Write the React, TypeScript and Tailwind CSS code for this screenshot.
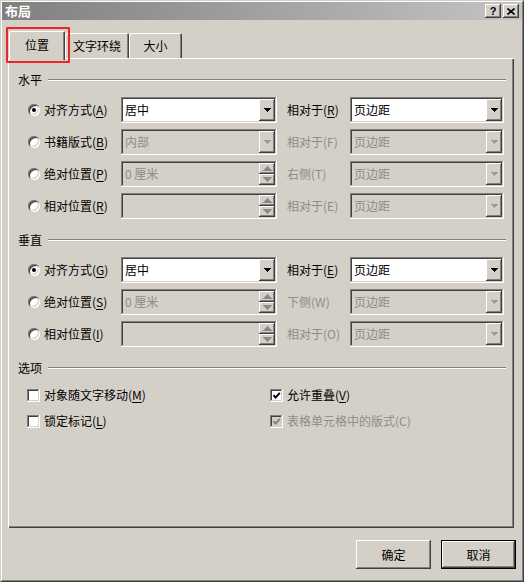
import React from 'react';

const raised =
  'shadow-[inset_-1px_-1px_0_#404040,inset_1px_1px_0_#fff,inset_-2px_-2px_0_#808080,inset_2px_2px_0_#d4d0c8]';
const sunken =
  'shadow-[inset_-1px_-1px_0_#fff,inset_1px_1px_0_#808080,inset_-2px_-2px_0_#d4d0c8,inset_2px_2px_0_#404040]';

function Down({ c }: { c: string }) {
  return (
    <svg width="7" height="4" viewBox="0 0 7 4" shapeRendering="crispEdges">
      <path d="M0 0h7v1h-1v1h-1v1h-1v1h-1v-1h-1v-1h-1v-1h-1z" fill={c} />
    </svg>
  );
}

function Tri({ up, c }: { up?: boolean; c: string }) {
  return (
    <svg width="9" height="5" viewBox="0 0 9 5" className={up ? 'rotate-180' : ''} shapeRendering="crispEdges">
      <path d="M0 0h9v1h-1v1h-1v1h-1v1h-1v1h-1v-1h-1v-1h-1v-1h-1v-1h-1z" fill={c} />
    </svg>
  );
}

function Key({ k, off }: { k: string; off?: boolean }) {
  return <>({off ? k : <u className="underline-offset-2">{k}</u>})</>;
}

function Combo({ value, off, spin, w }: { value: string; off?: boolean; spin?: boolean; w: string }) {
  return (
    <div className={`h-[26px] flex items-stretch p-[2px] ${w} ${off ? 'bg-[#d4d0c8]' : 'bg-white'} ${sunken}`}>
      <span className={`flex-1 flex items-center pl-[2px] text-[12px] leading-[16px] ${off ? 'text-[#8c8c8c]' : 'text-black'}`}>
        {value}
      </span>
      {spin ? (
        <div className="w-[16px] flex flex-col">
          <div className={`flex-1 flex items-center justify-center bg-[#d4d0c8] ${raised}`}>
            <Tri up c="#8a8a8a" />
          </div>
          <div className={`flex-1 flex items-center justify-center bg-[#d4d0c8] ${raised}`}>
            <Tri c="#8a8a8a" />
          </div>
        </div>
      ) : (
        <div className={`w-[16px] flex items-center justify-center bg-[#d4d0c8] ${raised}`}>
          <Down c={off ? '#9a9a9a' : '#000'} />
        </div>
      )}
    </div>
  );
}

function Radio({ on }: { on?: boolean }) {
  return (
    <span
      className={`w-[12px] h-[12px] rounded-full bg-white flex items-center justify-center shrink-0 shadow-[inset_1px_1px_0_#808080,inset_-1px_-1px_0_#fff,inset_2px_2px_0_#404040,inset_-2px_-2px_0_#d4d0c8]`}
    >
      {on && <span className="w-[4px] h-[4px] rounded-full bg-black" />}
    </span>
  );
}

function Check({ on, off }: { on?: boolean; off?: boolean }) {
  return (
    <span className={`w-[13px] h-[13px] shrink-0 flex items-center justify-center ${off ? 'bg-[#d4d0c8]' : 'bg-white'} ${sunken}`}>
      {on && (
        <svg width="9" height="9" viewBox="0 0 9 9">
          <polyline points="1.5,4.2 3.6,6.6 7.8,1.8" fill="none" stroke={off ? '#808080' : '#000'} strokeWidth="2" />
        </svg>
      )}
    </span>
  );
}

type Row = {
  label: string;
  k: string;
  on?: boolean;
  value: string;
  off1?: boolean;
  spin?: boolean;
  label2: string;
  k2: string;
  off2?: boolean;
};

function Rows({ rows }: { rows: Row[] }) {
  return (
    <div className="mt-[9px] flex flex-col gap-[6px]">
      {rows.map((r, i) => (
        <div key={i} className="flex items-center h-[26px]">
          <div className="w-[112px] pl-[19px] flex items-center gap-[4px] text-[12px] leading-[16px] text-black">
            <Radio on={r.on} />
            <span>
              {r.label}
              <Key k={r.k} />
            </span>
          </div>
          <Combo value={r.value} off={r.off1} spin={r.spin} w="w-[156px]" />
          <span
            className={`w-[73px] pl-[10px] text-[12px] leading-[16px] ${r.off2 ? 'text-[#8c8c8c]' : 'text-black'}`}
          >
            {r.label2}
            <Key k={r.k2} off={r.off2} />
          </span>
          <Combo value="页边距" off={r.off2} w="w-[154px]" />
        </div>
      ))}
    </div>
  );
}

function Header({ title, first }: { title: string; first?: boolean }) {
  return (
    <div className={`flex items-center h-[16px] pl-[9px] pr-[6px] gap-[6px] ${first ? '' : 'mt-[13px]'}`}>
      <span className="text-[12px] leading-[16px] text-black">{title}</span>
      <div className="flex-1 flex flex-col">
        <div className="h-px bg-[#808080]" />
        <div className="h-px bg-white" />
      </div>
    </div>
  );
}

const horiz: Row[] = [
  { label: '对齐方式', k: 'A', on: true, value: '居中', label2: '相对于', k2: 'R' },
  { label: '书籍版式', k: 'B', value: '内部', off1: true, label2: '相对于', k2: 'F', off2: true },
  { label: '绝对位置', k: 'P', value: '0 厘米', off1: true, spin: true, label2: '右侧', k2: 'T', off2: true },
  { label: '相对位置', k: 'R', value: '', off1: true, spin: true, label2: '相对于', k2: 'E', off2: true },
];

const vert: Row[] = [
  { label: '对齐方式', k: 'G', on: true, value: '居中', label2: '相对于', k2: 'E' },
  { label: '绝对位置', k: 'S', value: '0 厘米', off1: true, spin: true, label2: '下侧', k2: 'W', off2: true },
  { label: '相对位置', k: 'I', value: '', off1: true, spin: true, label2: '相对于', k2: 'O', off2: true },
];

export default function App() {
  return (
    <div className="w-[524px] h-[582px] font-['Noto_Sans_CJK_SC','Microsoft_YaHei',sans-serif] bg-[#d4d0c8] border border-t-[#d4d0c8] border-l-[#d4d0c8] border-r-[#404040] border-b-[#404040]">
      <div className="relative h-full flex flex-col border border-t-white border-l-white border-r-[#808080] border-b-[#808080]">
        {/* title bar */}
        <div className="h-[18px] flex items-center justify-between pl-[3px] pr-[3px] bg-linear-to-r from-[#808080] to-[#c4c4c4]">
          <span className="text-[13px] leading-[16px] font-bold text-white">布局</span>
          <div className="flex gap-[2px]">
            <div className={`w-[16px] h-[14px] bg-[#d4d0c8] flex items-center justify-center text-[11px] font-bold leading-none text-black font-['Liberation_Sans',sans-serif] ${raised}`}>
              ?
            </div>
            <div className={`w-[16px] h-[14px] bg-[#d4d0c8] flex items-center justify-center ${raised}`}>
              <svg width="8" height="7" viewBox="0 0 8 7">
                <path d="M0.5 0.5L7.5 6.5M7.5 0.5L0.5 6.5" stroke="#000" strokeWidth="1.6" />
              </svg>
            </div>
          </div>
        </div>

        {/* tabs */}
        <div className="mt-[11px] h-[27px] flex items-end pl-[7px]">
          <div className="relative z-10 -mb-[2px] w-[56px] h-[29px] bg-[#d4d0c8] rounded-t-[2px] flex items-center justify-center pb-[2px] text-[12px] leading-[16px] text-black shadow-[inset_1px_1px_0_#fff,inset_-1px_0_0_#404040,inset_-2px_0_0_#808080]">
            位置
          </div>
          <div className="w-[64px] h-[25px] rounded-t-[2px] flex items-center justify-center text-[12px] leading-[16px] text-black shadow-[inset_1px_1px_0_#fff,inset_-1px_0_0_#404040,inset_-2px_0_0_#808080]">
            文字环绕
          </div>
          <div className="w-[53px] h-[25px] rounded-t-[2px] flex items-center justify-center text-[12px] leading-[16px] text-black shadow-[inset_1px_1px_0_#fff,inset_-1px_0_0_#404040,inset_-2px_0_0_#808080]">
            大小
          </div>
        </div>

        {/* panel */}
        <div className="ml-[6px] w-[506px] h-[470px] p-px pr-[2px] shadow-[inset_1px_1px_0_#fff,inset_-1px_-1px_0_#404040,inset_-2px_-2px_0_#808080]">
          <div className="pt-[13px]">
            <Header title="水平" first />
            <Rows rows={horiz} />
            <Header title="垂直" />
            <Rows rows={vert} />
            <Header title="选项" />
            <div className="mt-[9px] flex flex-col gap-[6px] text-[12px] leading-[16px]">
              <div className="flex items-center h-[20px]">
                <div className="w-[261px] pl-[18px] flex items-center gap-[4px] text-black">
                  <Check />
                  <span>
                    对象随文字移动<Key k="M" />
                  </span>
                </div>
                <div className="flex items-center gap-[4px] text-black">
                  <Check on />
                  <span>
                    允许重叠<Key k="V" />
                  </span>
                </div>
              </div>
              <div className="flex items-center h-[20px]">
                <div className="w-[261px] pl-[18px] flex items-center gap-[4px] text-black">
                  <Check />
                  <span>
                    锁定标记<Key k="L" />
                  </span>
                </div>
                <div className="flex items-center gap-[4px] text-[#8c8c8c]">
                  <Check on off />
                  <span>表格单元格中的版式(C)</span>
                </div>
              </div>
            </div>
          </div>
        </div>

        {/* buttons */}
        <div className="mt-[12px] flex justify-end gap-[10px] pr-[6px]">
          <button className={`w-[75px] h-[29px] bg-[#d4d0c8] text-[12px] leading-[16px] text-black ${raised}`}>
            确定
          </button>
          <button className="w-[75px] h-[29px] bg-[#d4d0c8] text-[12px] leading-[16px] text-black shadow-[inset_0_0_0_1px_#000,inset_-2px_-2px_0_#404040,inset_2px_2px_0_#fff,inset_-3px_-3px_0_#808080]">
            取消
          </button>
        </div>

        {/* annotation */}
        <div className="absolute left-[4px] top-[25px] w-[64px] h-[36px] border-2 border-[#e8262a] rounded-[1px] pointer-events-none" />
      </div>
    </div>
  );
}
